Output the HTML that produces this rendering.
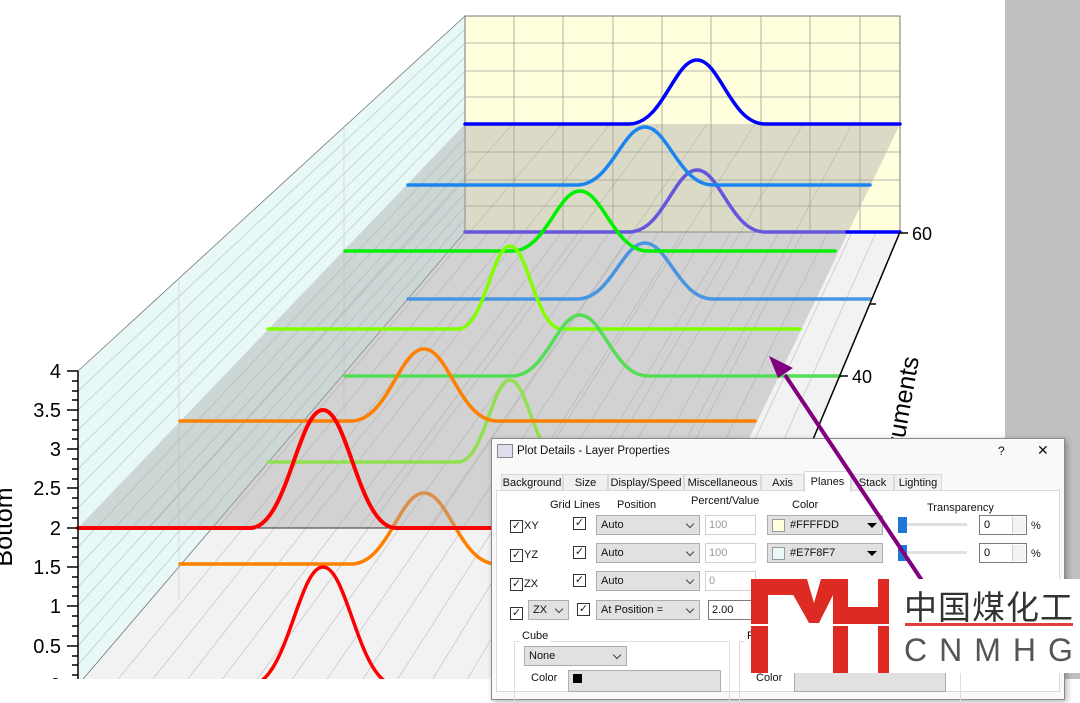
<!DOCTYPE html>
<html><head><meta charset="utf-8">
<style>
html,body{margin:0;padding:0;width:1080px;height:679px;overflow:hidden;background:#fff;font-family:"Liberation Sans",Arial,sans-serif;}
.a{position:absolute;}
.dlg{position:absolute;left:491px;top:438px;width:572px;height:260px;background:#f9f9f9;border:1px solid #8a8a8a;box-shadow:2px 2px 6px rgba(0,0,0,0.3);}
.t{position:absolute;font-size:11px;color:#111;white-space:nowrap;}
.tab{position:absolute;top:474px;height:17px;background:#f0f0f0;border:1px solid #d9d9d9;font-size:11px;line-height:17px;text-align:center;color:#111;box-sizing:border-box;}
.cb{position:absolute;width:11px;height:11px;border:1px solid #333;background:#fff;font-size:11px;line-height:11px;text-align:center;color:#222;}
.sel{position:absolute;height:20px;background:#e1e1e1;border:1px solid #adadad;box-sizing:border-box;font-size:11px;line-height:18px;padding-left:4px;color:#111;}
.sel:after{content:"";position:absolute;right:6px;top:5px;width:5px;height:5px;border-right:1px solid #444;border-bottom:1px solid #444;transform:rotate(45deg);}
.inp{position:absolute;height:20px;background:#fff;border:1px solid #d0d0d0;box-sizing:border-box;font-size:11px;line-height:18px;padding-left:3px;color:#999;}
.col{position:absolute;height:20px;background:#e1e1e1;border:1px solid #adadad;box-sizing:border-box;font-size:11px;line-height:18px;padding-left:22px;color:#111;}
.col i{position:absolute;left:4px;top:3px;width:11px;height:11px;border:1px solid #999;}
.col b{position:absolute;right:5px;top:7px;width:0;height:0;border-left:5px solid transparent;border-right:5px solid transparent;border-top:5px solid #000;}
.spin{position:absolute;height:20px;width:48px;background:#fff;border:1px solid #7a7a7a;box-sizing:border-box;font-size:11px;line-height:18px;padding-left:4px;}
.spin:after{content:"";position:absolute;right:1px;top:1px;width:12px;height:16px;border-left:1px solid #ccc;background:#f3f3f3;}
</style></head><body>
<div class="a" style="left:1005px;top:0;width:75px;height:679px;background:#c0c0c0;"></div>
<svg class="a" style="left:0;top:0" width="1080" height="679" viewBox="0 0 1080 679">
<polygon points="465,232 900,232 710,685 78,685" fill="#f2f2f2"/>
<polygon points="465,16 78,371 78,685 465,232" fill="#e7f8f7" stroke="#777" stroke-width="0.8"/>
<rect x="465" y="16" width="435" height="216" fill="#ffffdd" stroke="#777" stroke-width="1"/>
<g stroke="#888" stroke-width="0.8" opacity="0.8">
<line x1="465" y1="43" x2="900" y2="43"/><line x1="465" y1="71" x2="900" y2="71"/><line x1="465" y1="97" x2="900" y2="97"/><line x1="465" y1="152" x2="900" y2="152"/><line x1="465" y1="180" x2="900" y2="180"/><line x1="465" y1="206" x2="900" y2="206"/>
<line x1="514" y1="16" x2="514" y2="232"/><line x1="563" y1="16" x2="563" y2="232"/><line x1="613" y1="16" x2="613" y2="232"/><line x1="662" y1="16" x2="662" y2="232"/><line x1="711" y1="16" x2="711" y2="232"/><line x1="761" y1="16" x2="761" y2="232"/><line x1="810" y1="16" x2="810" y2="232"/><line x1="860" y1="16" x2="860" y2="232"/>
</g>
<g stroke="#9aa" stroke-width="0.7" opacity="0.6">
<line x1="465" y1="43" x2="78" y2="410"/><line x1="465" y1="71" x2="78" y2="449"/><line x1="465" y1="97" x2="78" y2="488"/><line x1="465" y1="152" x2="78" y2="567"/><line x1="465" y1="180" x2="78" y2="606"/><line x1="465" y1="206" x2="78" y2="646"/>
<line x1="465" y1="29" x2="78" y2="391"/><line x1="465" y1="57" x2="78" y2="430"/><line x1="465" y1="84" x2="78" y2="469"/><line x1="465" y1="111" x2="78" y2="508"/><line x1="465" y1="138" x2="78" y2="547"/><line x1="465" y1="166" x2="78" y2="587"/><line x1="465" y1="193" x2="78" y2="626"/><line x1="465" y1="219" x2="78" y2="665"/>
<line x1="179" y1="278" x2="179" y2="600" stroke="#bbb"/><line x1="344" y1="127" x2="344" y2="420" stroke="#bbb"/>
</g>
<g stroke="#777" stroke-width="0.6" opacity="0.45">
<line x1="489" y1="232" x2="113" y2="685"/><line x1="513" y1="232" x2="148" y2="685"/><line x1="538" y1="232" x2="183" y2="685"/><line x1="562" y1="232" x2="218" y2="685"/><line x1="586" y1="232" x2="253" y2="685"/><line x1="610" y1="232" x2="288" y2="685"/><line x1="634" y1="232" x2="323" y2="685"/><line x1="659" y1="232" x2="359" y2="685"/><line x1="683" y1="232" x2="394" y2="685"/><line x1="707" y1="232" x2="429" y2="685"/><line x1="731" y1="232" x2="464" y2="685"/><line x1="755" y1="232" x2="499" y2="685"/><line x1="779" y1="232" x2="534" y2="685"/><line x1="803" y1="232" x2="569" y2="685"/><line x1="828" y1="232" x2="604" y2="685"/><line x1="852" y1="232" x2="640" y2="685"/><line x1="876" y1="232" x2="675" y2="685"/>
</g>
<g fill="none" stroke-width="3.5" stroke-linecap="round">
<path d="M180,564 L351,564 C388,564 399,493 424,493 C449,493 460,564 497,564" stroke="#ff8000"/>
<path d="M200,685 L250,685 C287,685 298,567 323,567 C348,567 359,685 396,685 L500,685" stroke="#ff0000"/>
</g>
<polygon points="465,124 900,124 706,528 78,528" fill="#a8a8a8" opacity="0.42"/>
<line x1="78" y1="528" x2="706" y2="528" stroke="#333" stroke-width="1"/>
<g stroke="#666" stroke-width="0.6" opacity="0.3">
<line x1="513" y1="124" x2="148" y2="528"/><line x1="562" y1="124" x2="218" y2="528"/><line x1="610" y1="124" x2="288" y2="528"/><line x1="659" y1="124" x2="359" y2="528"/><line x1="707" y1="124" x2="429" y2="528"/><line x1="755" y1="124" x2="499" y2="528"/><line x1="803" y1="124" x2="569" y2="528"/><line x1="852" y1="124" x2="640" y2="528"/>
</g>
<g fill="none" stroke-width="3.5" stroke-linecap="round">
<path d="M465,232 L629,232 C663,232 674,170 697,170 C720,170 731,232 765,232 L847,232" stroke="#6655dd"/>
<line x1="847" y1="232" x2="900" y2="232" stroke="#0000ff"/>
<path d="M465,124 L629,124 C663,124 674,60 697,60 C720,60 731,124 765,124 L900,124" stroke="#0000ff"/>
<path d="M408,185 L577,185 C611,185 622,127 645,127 C668,127 679,185 713,185 L870,185" stroke="#1a85f0"/>
<path d="M408,299 L577,299 C611,299 622,243 645,243 C668,243 679,299 713,299 L870,299" stroke="#4a95e0"/>
<path d="M345,251 L512,251 C546,251 557,191 580,191 C603,191 614,251 648,251 L835,251" stroke="#00f000"/>
<path d="M268,462 L458,462 C484,462 492,380 510,380 C528,380 536,462 562,462" stroke="#90e050"/>
<path d="M268,329 L458,329 C484,329 492,246 510,246 C528,246 536,329 562,329 L800,329" stroke="#80ff00"/>
<path d="M345,376 L512,376 C546,376 557,315 580,315 C603,315 614,376 648,376 L840,376" stroke="#55dd55"/>
<path d="M180,421 L351,421 C388,421 399,349 424,349 C449,349 460,421 497,421 L755,421" stroke="#ff8000"/>
<path d="M78,528 L250,528 C287,528 298,410 323,410 C348,410 359,528 396,528 L495,528" stroke="#ff0000" stroke-width="4"/>
</g>
<g stroke="#000" stroke-width="1.5">
<line x1="900" y1="232" x2="710" y2="685"/>
<line x1="900" y1="233" x2="908" y2="233"/><line x1="870" y1="304" x2="876" y2="304"/><line x1="840" y1="376" x2="848" y2="376"/>
</g>
<text x="912" y="240" font-size="18" font-family="Liberation Sans">60</text>
<text x="852" y="383" font-size="18" font-family="Liberation Sans">40</text>
<text transform="translate(919,358) rotate(-80)" font-size="25" font-family="Liberation Sans" text-anchor="end">Instruments</text>
<g stroke="#000" stroke-width="1.5">
<line x1="78" y1="371" x2="78" y2="685"/>
<line x1="67" y1="371" x2="78" y2="371"/><line x1="67" y1="410" x2="78" y2="410"/><line x1="67" y1="449" x2="78" y2="449"/><line x1="67" y1="488" x2="78" y2="488"/><line x1="67" y1="528" x2="78" y2="528"/><line x1="67" y1="567" x2="78" y2="567"/><line x1="67" y1="606" x2="78" y2="606"/><line x1="67" y1="646" x2="78" y2="646"/>
<line x1="72" y1="381" x2="78" y2="381"/><line x1="72" y1="391" x2="78" y2="391"/><line x1="72" y1="400" x2="78" y2="400"/><line x1="72" y1="420" x2="78" y2="420"/><line x1="72" y1="430" x2="78" y2="430"/><line x1="72" y1="439" x2="78" y2="439"/><line x1="72" y1="459" x2="78" y2="459"/><line x1="72" y1="469" x2="78" y2="469"/><line x1="72" y1="479" x2="78" y2="479"/><line x1="72" y1="498" x2="78" y2="498"/><line x1="72" y1="508" x2="78" y2="508"/><line x1="72" y1="518" x2="78" y2="518"/><line x1="72" y1="538" x2="78" y2="538"/><line x1="72" y1="547" x2="78" y2="547"/><line x1="72" y1="557" x2="78" y2="557"/><line x1="72" y1="577" x2="78" y2="577"/><line x1="72" y1="587" x2="78" y2="587"/><line x1="72" y1="596" x2="78" y2="596"/><line x1="72" y1="616" x2="78" y2="616"/><line x1="72" y1="626" x2="78" y2="626"/><line x1="72" y1="636" x2="78" y2="636"/><line x1="72" y1="656" x2="78" y2="656"/><line x1="72" y1="665" x2="78" y2="665"/><line x1="72" y1="675" x2="78" y2="675"/>
</g>
<g font-size="20" font-family="Liberation Sans" text-anchor="end">
<text x="61" y="378">4</text><text x="61" y="417">3.5</text><text x="61" y="456">3</text><text x="61" y="495">2.5</text><text x="61" y="535">2</text><text x="61" y="574">1.5</text><text x="61" y="613">1</text><text x="61" y="653">0.5</text><text x="61" y="692">0</text>
</g>
<text transform="translate(12,527) rotate(-90)" font-size="25" font-family="Liberation Sans" text-anchor="middle">Bottom</text>
</svg>

<div class="dlg"></div>
<div class="a" style="left:497px;top:444px;width:14px;height:12px;border:1px solid #888;background:#dde;"></div>
<div class="t" style="left:517px;top:445px;font-size:11.5px;">Plot Details - Layer Properties</div>
<div class="t" style="left:998px;top:444px;font-size:12px;">?</div>
<div class="t" style="left:1037px;top:442px;font-size:14px;">✕</div>
<div class="a" style="left:496px;top:490px;width:562px;height:200px;background:#fff;border:1px solid #d9d9d9;"></div>
<div class="tab" style="left:501px;width:62px;">Background</div>
<div class="tab" style="left:563px;width:45px;">Size</div>
<div class="tab" style="left:608px;width:76px;">Display/Speed</div>
<div class="tab" style="left:684px;width:77px;">Miscellaneous</div>
<div class="tab" style="left:761px;width:43px;">Axis</div>
<div class="tab" style="left:804px;width:47px;top:471px;height:21px;background:#fff;border-bottom:none;line-height:20px;">Planes</div>
<div class="tab" style="left:851px;width:43px;">Stack</div>
<div class="tab" style="left:894px;width:48px;">Lighting</div>

<div class="t" style="left:550px;top:499px;">Grid Lines</div>
<div class="t" style="left:617px;top:499px;">Position</div>
<div class="t" style="left:691px;top:495px;">Percent/Value</div>
<div class="t" style="left:792px;top:499px;">Color</div>
<div class="t" style="left:927px;top:502px;">Transparency</div>

<div class="cb" style="left:510px;top:520px;">✓</div><div class="t" style="left:524px;top:520px;">XY</div>
<div class="cb" style="left:573px;top:517px;">✓</div>
<div class="sel" style="left:596px;top:515px;width:104px;">Auto</div>
<div class="inp" style="left:705px;top:515px;width:51px;">100</div>
<div class="col" style="left:767px;top:515px;width:116px;"><i style="background:#ffffdd"></i>#FFFFDD<b></b></div>
<div class="a" style="left:903px;top:523px;width:64px;height:3px;background:#e0e0e0;"></div>
<div class="a" style="left:898px;top:517px;width:9px;height:16px;background:#1e78d7;"></div>
<div class="spin" style="left:979px;top:515px;">0</div><div class="t" style="left:1031px;top:520px;">%</div>

<div class="cb" style="left:510px;top:549px;">✓</div><div class="t" style="left:524px;top:549px;">YZ</div>
<div class="cb" style="left:573px;top:546px;">✓</div>
<div class="sel" style="left:596px;top:543px;width:104px;">Auto</div>
<div class="inp" style="left:705px;top:543px;width:51px;">100</div>
<div class="col" style="left:767px;top:543px;width:116px;"><i style="background:#e7f8f7"></i>#E7F8F7<b></b></div>
<div class="a" style="left:903px;top:551px;width:64px;height:3px;background:#e0e0e0;"></div>
<div class="a" style="left:898px;top:545px;width:9px;height:16px;background:#1e78d7;"></div>
<div class="spin" style="left:979px;top:543px;">0</div><div class="t" style="left:1031px;top:548px;">%</div>

<div class="cb" style="left:510px;top:578px;">✓</div><div class="t" style="left:524px;top:578px;">ZX</div>
<div class="cb" style="left:573px;top:574px;">✓</div>
<div class="sel" style="left:596px;top:571px;width:104px;">Auto</div>
<div class="inp" style="left:705px;top:571px;width:51px;">0</div>

<div class="cb" style="left:510px;top:607px;">✓</div>
<div class="sel" style="left:528px;top:600px;width:41px;">ZX</div>
<div class="cb" style="left:577px;top:603px;">✓</div>
<div class="sel" style="left:596px;top:600px;width:104px;">At Position =</div>
<div class="inp" style="left:708px;top:600px;width:50px;color:#111;border-color:#7a7a7a;">2.00</div>

<div class="a" style="left:514px;top:641px;width:214px;height:60px;border:1px solid #ddd;"></div>
<div class="t" style="left:520px;top:630px;background:#fff;padding:0 2px;">Cube</div>
<div class="sel" style="left:524px;top:646px;width:103px;">None</div>
<div class="t" style="left:531px;top:672px;">Color</div>
<div class="a" style="left:568px;top:670px;width:151px;height:20px;background:#e1e1e1;border:1px solid #adadad;"></div>
<div class="a" style="left:573px;top:674px;width:9px;height:9px;background:#000;"></div>
<div class="a" style="left:739px;top:641px;width:220px;height:60px;border:1px solid #ddd;"></div>
<div class="t" style="left:745px;top:630px;background:#fff;padding:0 2px;">P</div>
<div class="t" style="left:756px;top:672px;">Color</div>
<div class="a" style="left:794px;top:670px;width:150px;height:20px;background:#e1e1e1;border:1px solid #adadad;"></div>

<svg class="a" style="left:0;top:0" width="1080" height="679" viewBox="0 0 1080 679">
<line x1="785" y1="375" x2="935" y2="600" stroke="#800080" stroke-width="4"/>
<polygon points="769,356 793,368 778,378" fill="#800080"/>
</svg>

<div class="a" style="left:751px;top:579px;width:329px;height:94px;background:#fff;"></div>
<svg class="a" style="left:751px;top:579px" width="140" height="94" viewBox="0 0 140 94">
<g fill="#dd2a22">
<rect x="0" y="0" width="17" height="94"/>
<rect x="0" y="0" width="44" height="16"/>
<polygon points="40,0 56,0 63,24 70,0 82,0 82,16 68,44 58,44 40,12"/>
<rect x="82" y="0" width="15" height="94"/>
<rect x="97" y="28" width="30" height="18"/>
<rect x="127" y="0" width="11" height="94"/>
</g>
<rect x="0" y="45" width="138" height="2" fill="#fff"/>
</svg>
<div class="t" style="left:904px;top:581px;font-size:33px;color:#333;font-family:'Liberation Sans','Noto Sans CJK SC',sans-serif;letter-spacing:1px;">中国煤化工</div>
<div class="a" style="left:905px;top:623px;width:168px;height:3px;background:#e04040;"></div>
<div class="t" style="left:904px;top:632px;font-size:32px;color:#555;letter-spacing:12px;">CNMHG</div>
</body></html>
